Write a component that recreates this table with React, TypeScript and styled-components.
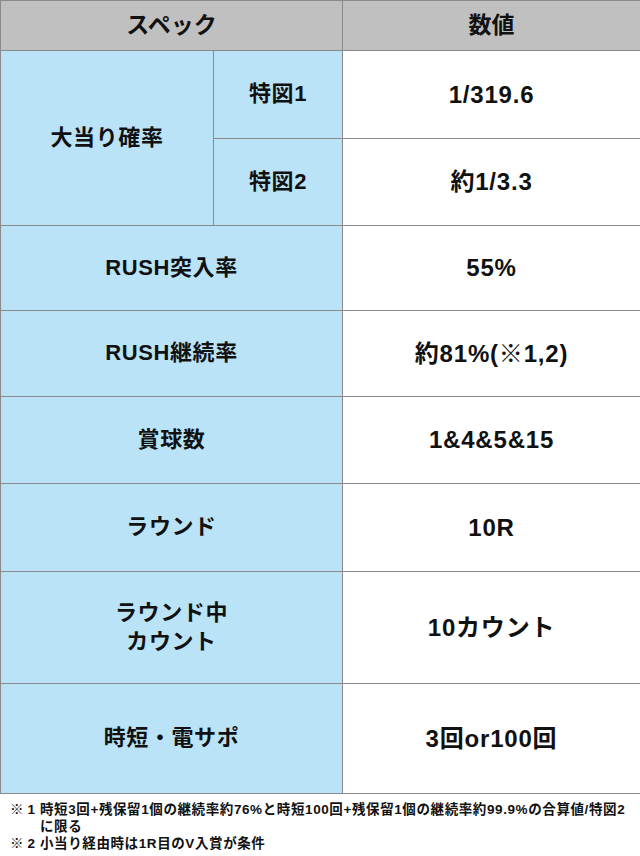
import React from "react";
import styled, { createGlobalStyle } from "styled-components";

const GlobalStyle = createGlobalStyle`
  html, body {
    margin: 0;
    padding: 0;
    background: #ffffff;
  }
  body {
    font-family: "Liberation Sans", "Noto Sans CJK JP", sans-serif;
    color: #111111;
  }
`;

type Row = {
  label: React.ReactNode;
  value: string;
  height: number;
};

const rows: Row[] = [
  { label: "RUSH突入率", value: "55%", height: 85 },
  { label: "RUSH継続率", value: "約81%(※1,2)", height: 86 },
  { label: "賞球数", value: "1&4&5&15", height: 87 },
  { label: "ラウンド", value: "10R", height: 88 },
  {
    label: (
      <>
        ラウンド中
        <br />
        カウント
      </>
    ),
    value: "10カウント",
    height: 112,
  },
  { label: "時短・電サポ", value: "3回or100回", height: 110 },
];

const notes = [
  {
    mark: "※1",
    text: "時短3回+残保留1個の継続率約76%と時短100回+残保留1個の継続率約99.9%の合算値/特図2に限る",
  },
  { mark: "※2", text: "小当り経由時は1R目のV入賞が条件" },
];

const App = () => {
  return (
    <Page>
      <GlobalStyle />
      <SpecTable>
        <colgroup>
          <col style={{ width: 213 }} />
          <col style={{ width: 129 }} />
          <col style={{ width: 298 }} />
        </colgroup>
        <tbody>
          <tr style={{ height: 50 }}>
            <HeadCell colSpan={2}>スペック</HeadCell>
            <HeadCell>数値</HeadCell>
          </tr>
          <tr style={{ height: 88 }}>
            <LabelCell rowSpan={2}>大当り確率</LabelCell>
            <LabelCell>特図1</LabelCell>
            <ValueCell>1/319.6</ValueCell>
          </tr>
          <tr style={{ height: 87 }}>
            <LabelCell>特図2</LabelCell>
            <ValueCell>約1/3.3</ValueCell>
          </tr>
          {rows.map((row, i) => (
            <tr key={i} style={{ height: row.height }}>
              <LabelCell colSpan={2}>{row.label}</LabelCell>
              <ValueCell>{row.value}</ValueCell>
            </tr>
          ))}
        </tbody>
      </SpecTable>
      <Notes>
        {notes.map((n) => (
          <Note key={n.mark}>
            <NoteMark>{n.mark}</NoteMark>
            <NoteText>{n.text}</NoteText>
          </Note>
        ))}
      </Notes>
    </Page>
  );
};

export default App;

const Page = styled.div`
  width: 640px;
  height: 856px;
  overflow: hidden;
`;

const SpecTable = styled.table`
  width: 640px;
  table-layout: fixed;
  border-collapse: collapse;
  border: 1px solid #8a8a8a;
`;

const Cell = styled.td`
  border: 1px solid #8a8a8a;
  padding: 0;
  text-align: center;
  vertical-align: middle;
  font-weight: bold;
  line-height: 1.3;
`;

const HeadCell = styled(Cell)`
  background: #c0c0c0;
  font-size: 23px;
`;

const LabelCell = styled(Cell)`
  background: #bae3f8;
  font-size: 22px;
  letter-spacing: 0.6px;
`;

const ValueCell = styled(Cell)`
  background: #ffffff;
  font-size: 24px;
  letter-spacing: 0.8px;
`;

const Notes = styled.div`
  display: flex;
  flex-direction: column;
  padding: 7px 12px 0 10px;
`;

const Note = styled.div`
  display: flex;
  font-size: 13.5px;
  font-weight: bold;
  line-height: 17px;
  letter-spacing: 0.6px;
`;

const NoteMark = styled.span`
  flex: 0 0 30px;
  letter-spacing: 4px;
`;

const NoteText = styled.span`
  flex: 1;
`;
